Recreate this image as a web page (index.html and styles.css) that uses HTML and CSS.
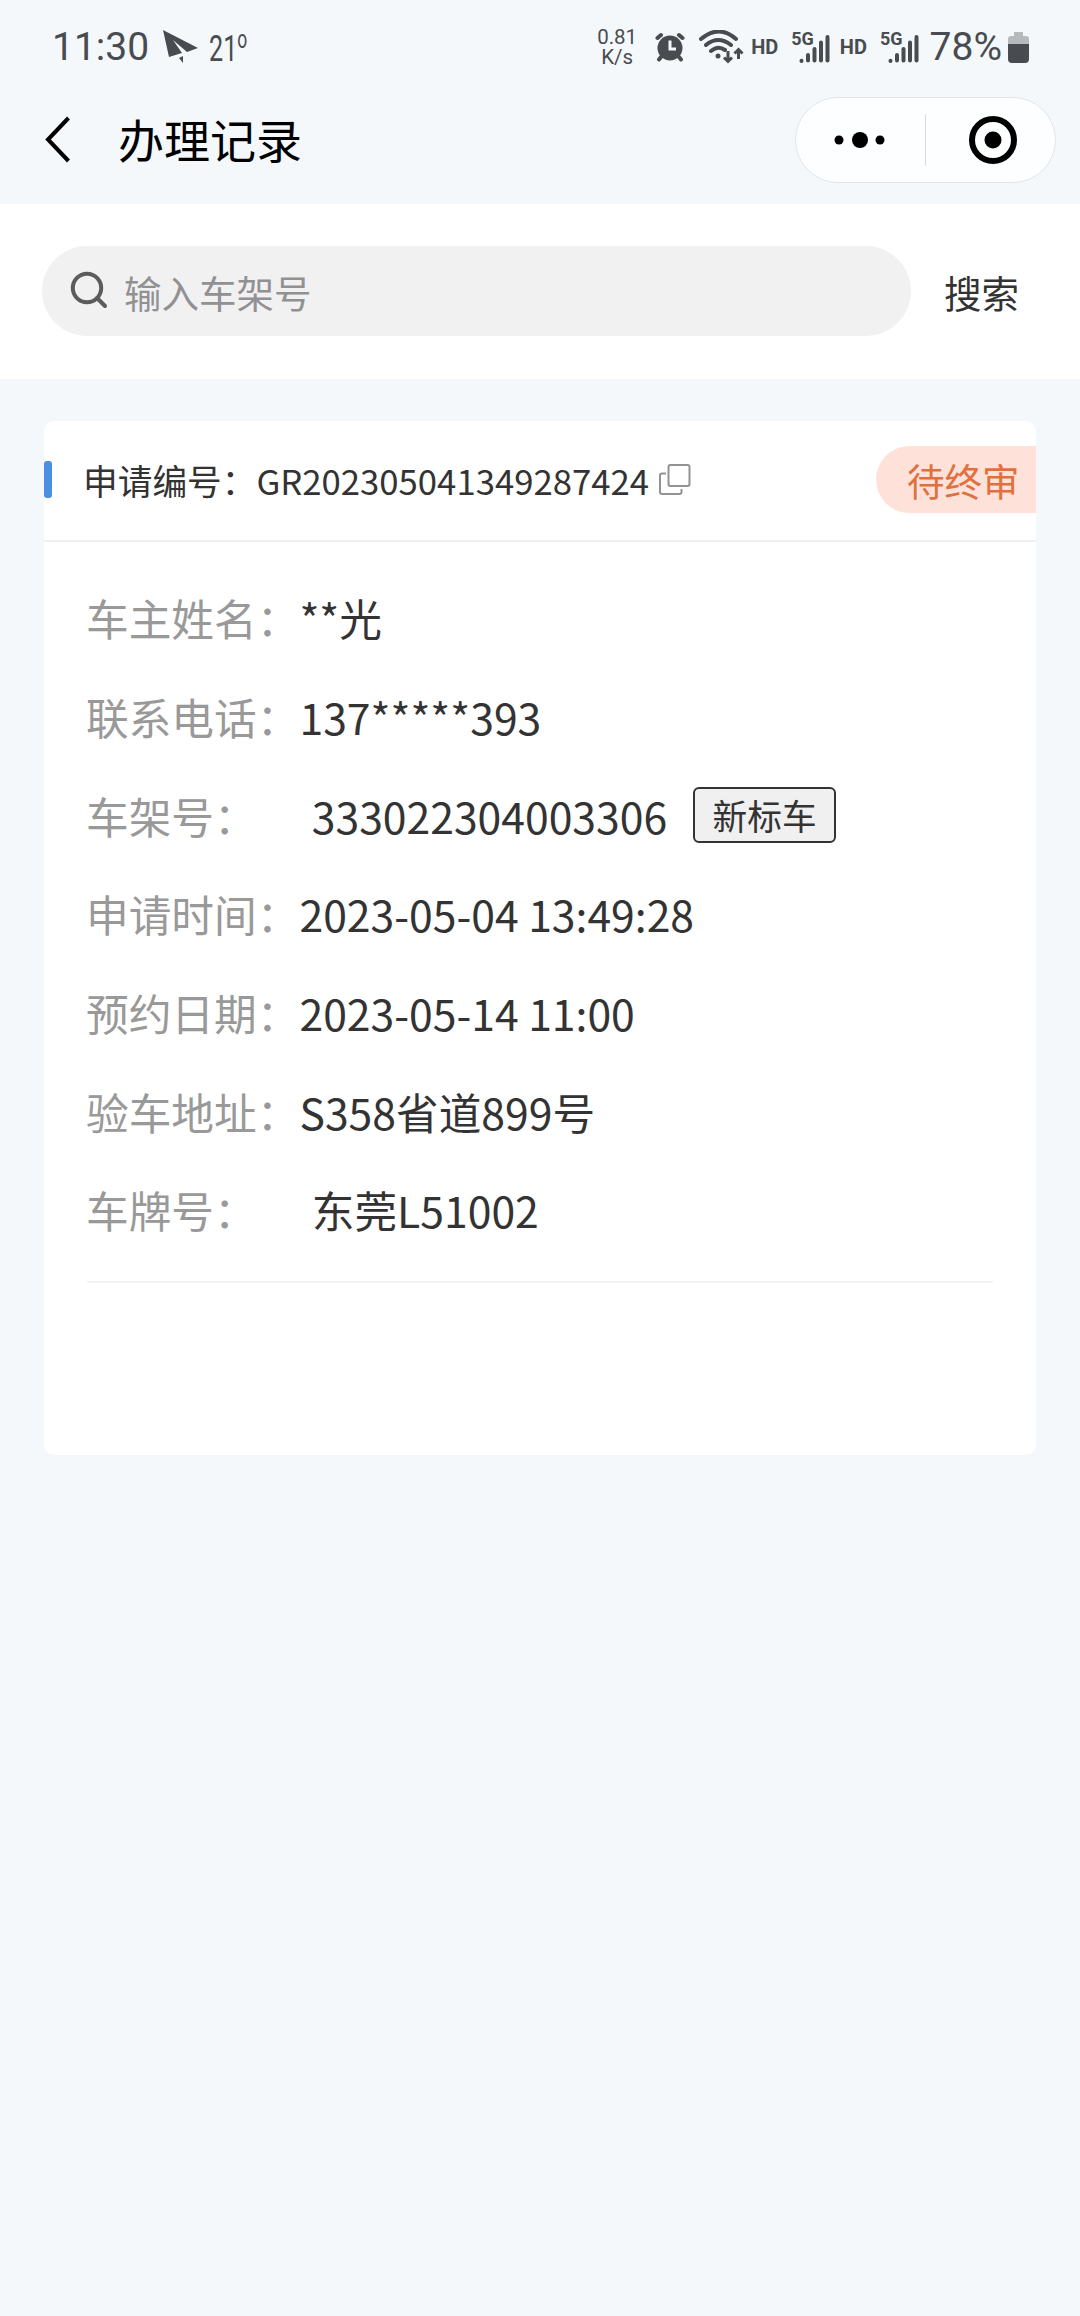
FILE: index.html
```html
<!DOCTYPE html>
<html lang="zh-CN">
<head>
  <meta charset="UTF-8" />
  <meta name="viewport" content="width=device-width, initial-scale=1" />
  <title>办理记录</title>
  <link rel="stylesheet" href="styles.css">
</head>
<body>

  <header>
    <div class="status-bar">
      <span class="time">11:30</span>
      <svg class="plane" width="36" height="34" viewBox="0 0 36 34">
        <path d="M0 0L35 18L24 22L10 10L19 23L6 27Z M16 28L20 26L20 33Z" />
      </svg>
      <span class="temp">21<span class="degree">o</span></span>

      <div class="status-right">
        <div class="speed"><span>0.81</span><span>K/s</span></div>
        <svg class="alarm" width="30" height="30" viewBox="0 0 30 30">
          <circle cx="15" cy="16" r="12.500" />
          <path class="line" d="M2.500 6L6 3M27.500 6L24 3M6 25L4 27.500M24 25L26 27.500" />
          <path class="hands" d="M15 8.500V17H21" />
        </svg>
        <svg class="wifi" width="46" height="34" viewBox="0 0 46 34">
          <path class="line" d="M2 9Q20 -6 37 9M7 15Q19 5 32 15M12 21Q19 15 26 20" />
          <circle cx="19" cy="26" r="2.500" />
          <path class="arrow" d="M29 21V31M25 27.500L29 31.500L33 27.500M39.500 29V20M35.500 23.500L39.500 19.500L43.500 23.500" />
        </svg>
        <span class="hd">HD</span>
        <div class="signal">
          <span>5G</span>
          <svg width="40" height="34" viewBox="0 0 40 34">
            <path class="line" d="M11.500 30.800V31M18 25V30.500M24.500 19V30.500M31 12.500V30.500M37.500 7V30.500" />
          </svg>
        </div>
        <span class="hd">HD</span>
        <div class="signal">
          <span>5G</span>
          <svg width="40" height="34" viewBox="0 0 40 34">
            <path class="line" d="M11.500 30.800V31M18 25V30.500M24.500 19V30.500M31 12.500V30.500M37.500 7V30.500" />
          </svg>
        </div>
        <span class="percent">78%</span>
        <svg class="battery" width="21" height="31" viewBox="0 0 21 31">
          <path class="empty" d="M6 0H15V4H18Q21 4 21 7V13H0V7Q0 4 3 4H6Z" />
          <path d="M0 12H21V27Q21 31 17 31H4Q0 31 0 27Z" />
        </svg>
      </div>
    </div>

    <nav>
      <svg class="back" width="26" height="48" viewBox="0 0 26 48">
        <path d="M24.500 2L4 23.500L24.500 45" />
      </svg>
      <h1>办理记录</h1>
      <div class="capsule">
        <svg width="52" height="18" viewBox="0 0 52 18">
          <circle cx="5" cy="9" r="4.500" />
          <circle cx="26" cy="9" r="8" />
          <circle cx="46" cy="9" r="4.500" />
        </svg>
        <i></i>
        <svg width="48" height="48" viewBox="0 0 48 48">
          <circle class="ring" cx="24" cy="24" r="21" />
          <circle cx="24" cy="24" r="8.500" />
        </svg>
      </div>
    </nav>
  </header>

  <section class="search">
    <div class="search-box">
      <svg width="38" height="38" viewBox="0 0 38 38">
        <circle cx="17" cy="17" r="14.200" />
        <path d="M27 27L35 35" />
      </svg>
      <span>输入车架号</span>
    </div>
    <span class="search-btn">搜索</span>
  </section>

  <main>
    <article class="card">
      <div class="card-head">
        <i class="mark"></i>
        <span class="number">申请编号：GR202305041349287424</span>
        <svg width="32" height="32" viewBox="0 0 32 32">
          <rect x="9.500" y="1" width="21" height="21" rx="2" />
          <path d="M7 9.500H3Q1 9.500 1 11.500V28Q1 30 3 30H20Q22.500 30 22.500 28V25" />
        </svg>
        <span class="state">待终审</span>
      </div>

      <ul>
        <li><label>车主姓名：</label><span>**光</span></li>
        <li><label>联系电话：</label><span>137*****393</span></li>
        <li class="short"><label>车架号：</label><span>333022304003306</span><b class="tag">新标车</b></li>
        <li><label>申请时间：</label><span>2023-05-04 13:49:28</span></li>
        <li><label>预约日期：</label><span>2023-05-14 11:00</span></li>
        <li><label>验车地址：</label><span>S358省道899号</span></li>
        <li class="short"><label>车牌号：</label><span>东莞L51002</span></li>
      </ul>
    </article>
  </main>

</body>
</html>
```
FILE: styles.css
```css
:root {
  --bg: #f4f8fb;
  --icon: #484c50;
  --text: #333;
  --label: #999;
  --blue: #4a90e2;
}

* {
  box-sizing: border-box;
  margin: 0;
  padding: 0;
}

body {
  font-family: 'Noto Sans CJK SC', sans-serif;
  background: var(--bg);
  color: var(--text);
  min-height: 100vh;
  white-space: nowrap;
}

svg {
  flex: none;
}

header {
  height: 204px;
}

/* status bar */
.status-bar {
  height: 94px;
  padding: 0 51px 0 52px;
  display: flex;
  align-items: center;
  font-family: Roboto, sans-serif;
  color: var(--icon);
}

.status-bar svg {
  fill: var(--icon);
}

.status-bar .line {
  fill: none;
  stroke: var(--icon);
  stroke-width: 4;
  stroke-linecap: round;
}

.time {
  width: 99px;
  font-size: 39px;
}

.plane {
  margin: 0 10px 0 12px;
}

.temp {
  display: flex;
  font-size: 36px;
  line-height: 36px;
  transform: scaleX(0.7);
  transform-origin: left;
  padding-top: 3px;
}

.degree {
  font-size: 25px;
  line-height: 18px;
}

.status-right {
  margin-left: auto;
  display: flex;
  align-items: center;
}

.speed {
  display: flex;
  flex-direction: column;
  align-items: center;
  font-size: 20.5px;
  line-height: 20px;
  margin-right: 18px;
}

.alarm {
  margin-right: 14px;
}

.alarm .hands {
  fill: none;
  stroke: var(--bg);
  stroke-width: 3;
}

.wifi .arrow {
  fill: none;
  stroke: var(--icon);
  stroke-width: 3;
}

.hd {
  font-size: 20px;
  font-weight: 700;
  margin: 0 13px 0 6px;
}

.hd + .signal + .hd {
  margin-left: 10px;
}

.signal {
  display: flex;
}

.signal span {
  font-size: 18px;
  line-height: 17px;
  font-weight: 700;
  margin-right: -24px;
}

.percent {
  font-size: 39px;
  margin: 0 6px 0 11px;
}

.battery .empty {
  fill: #b7babd;
}

/* title bar */
nav {
  height: 92px;
  padding: 0 24px 0 44px;
  display: flex;
  align-items: center;
}

.back path {
  fill: none;
  stroke: #000;
  stroke-width: 4;
}

h1 {
  font-size: 46px;
  font-weight: 400;
  color: #000;
  margin-left: 48px;
  padding-bottom: 4px;
}

.capsule {
  width: 261px;
  height: 86px;
  margin-left: auto;
  padding: 0 38px;
  display: flex;
  align-items: center;
  justify-content: space-between;
  background: #fdfeff;
  border: 1px solid #e2e5e8;
  border-radius: 43px;
}

.capsule i {
  width: 1px;
  height: 52px;
  margin-right: 5px;
  background: #d8dadc;
}

.capsule .ring {
  fill: none;
  stroke: #000;
  stroke-width: 6;
}

/* search */
.search {
  height: 175px;
  padding: 0 61px 1px 42px;
  background: #fff;
  display: flex;
  align-items: center;
  justify-content: space-between;
  font-size: 37.5px;
}

.search-box {
  width: 869px;
  height: 90px;
  padding-left: 28px;
  border-radius: 45px;
  background: #f1f1f1;
  color: #919194;
  display: flex;
  align-items: center;
  gap: 16px;
}

.search-box svg {
  fill: none;
  stroke: #5c5c5c;
  stroke-width: 4;
  stroke-linecap: round;
  margin-bottom: 2px;
}

/* record card */
main {
  padding: 42px 44px;
}

.card {
  height: 1034px;
  background: #fff;
  border-radius: 10px;
  overflow: hidden;
}

.card-head {
  height: 121px;
  padding-bottom: 2px;
  border-bottom: 2px solid #efefef;
  display: flex;
  align-items: center;
}

.mark {
  width: 8px;
  height: 37px;
  border-radius: 3px;
  background: var(--blue);
}

.number {
  font-size: 34.7px;
  margin: 0 10px 0 31px;
}

.card-head svg {
  fill: none;
  stroke: #929292;
  stroke-width: 2;
}

.state {
  width: 160px;
  height: 67px;
  line-height: 67px;
  padding-left: 31px;
  margin-left: auto;
  border-radius: 34px 0 0 34px;
  background: #fee2d9;
  color: #e0703f;
  font-size: 37.5px;
}

ul {
  list-style: none;
  margin: 0 43px;
  padding: 26px 0 22px;
  border-bottom: 2px solid #f3f3f3;
}

li {
  height: 98.7px;
  margin-left: -1px;
  display: flex;
  align-items: center;
  font-size: 42.7px;
}

label {
  color: var(--label);
}

.short label {
  margin-right: 55px;
}

.tag {
  width: 143px;
  height: 56px;
  line-height: 52px;
  margin-left: 26px;
  border: 2px solid var(--text);
  border-radius: 6px;
  background: #f0f0f0;
  font-size: 34.7px;
  font-weight: 400;
  text-align: center;
}
```
